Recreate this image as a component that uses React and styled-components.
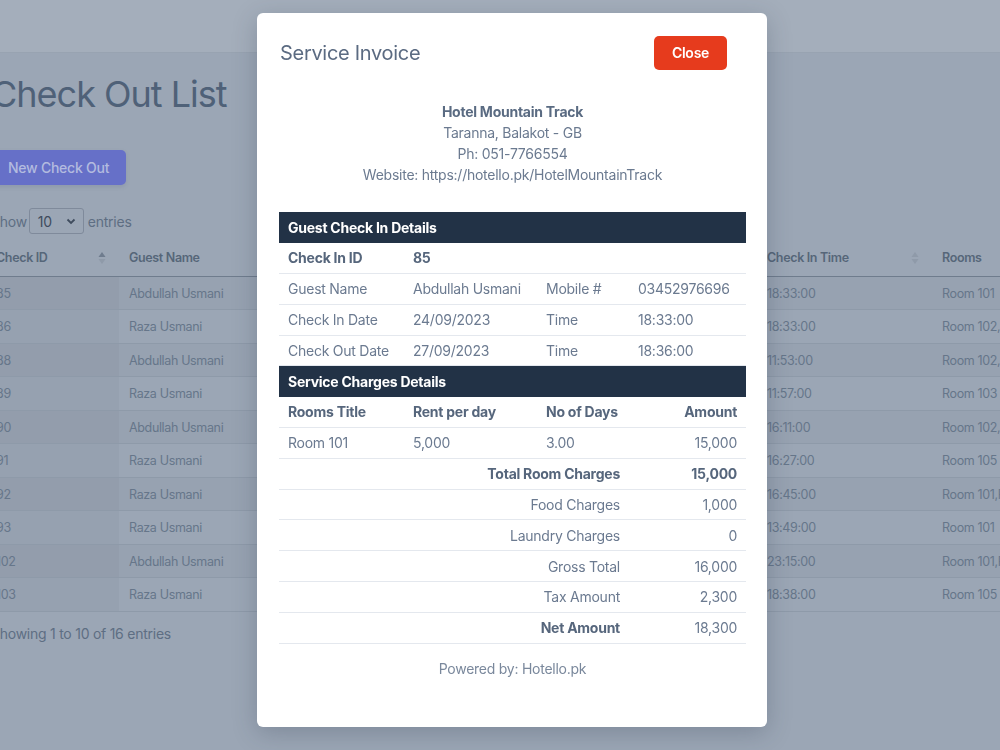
import React from "react";
import styled, { createGlobalStyle } from "styled-components";

const GlobalStyle = createGlobalStyle`
  html, body {
    margin: 0;
    padding: 0;
    background: #9ba6b5;
    font-family: Inter, "Noto Sans", "Liberation Sans", sans-serif;
    letter-spacing: -0.25px;
    overflow: hidden;
  }
  * { box-sizing: border-box; }
`;

const rows = [
  ["85", "Abdullah Usmani", "18:33:00", "Room 101"],
  ["86", "Raza Usmani", "18:33:00", "Room 102,Room 103"],
  ["88", "Abdullah Usmani", "11:53:00", "Room 102,Room 104"],
  ["89", "Raza Usmani", "11:57:00", "Room 103"],
  ["90", "Abdullah Usmani", "16:11:00", "Room 102,Room 105"],
  ["91", "Raza Usmani", "16:27:00", "Room 105"],
  ["92", "Raza Usmani", "16:45:00", "Room 101,Room 102"],
  ["93", "Raza Usmani", "13:49:00", "Room 101"],
  ["102", "Abdullah Usmani", "23:15:00", "Room 101,Room 104"],
  ["103", "Raza Usmani", "18:38:00", "Room 105"],
];

const charges = [
  { label: "Total Room Charges", value: "15,000", bold: true, boldValue: true },
  { label: "Food Charges", value: "1,000" },
  { label: "Laundry Charges", value: "0" },
  { label: "Gross Total", value: "16,000" },
  { label: "Tax Amount", value: "2,300" },
  { label: "Net Amount", value: "18,300", bold: true },
];

function SortIcon({ active }) {
  return (
    <SortSvg width="8" height="14" viewBox="0 0 8 14">
      <path d="M4 1 L7.5 6 L0.5 6 Z" fill={active ? "#6f7c8e" : "#8f9aa9"} />
      <path d="M4 13 L7.5 8 L0.5 8 Z" fill="#8f9aa9" />
    </SortSvg>
  );
}

export default function App() {
  return (
    <>
      <GlobalStyle />
      <Page>
        <NavBar />
        <Main>
          <Title>Check Out List</Title>
          <NewButton>New Check Out</NewButton>
          <ShowRow>
            Show
            <Select>
              <span>10</span>
              <svg width="10" height="7" viewBox="0 0 10 7">
                <path d="M1.5 1.5 L5 5 L8.5 1.5" fill="none" stroke="#3f4c5e" strokeWidth="1.8" />
              </svg>
            </Select>
            entries
          </ShowRow>
          <ListTable>
            <colgroup>
              <col style={{ width: 138 }} />
              <col style={{ width: 638 }} />
              <col style={{ width: 175 }} />
              <col style={{ width: 150 }} />
            </colgroup>
            <thead>
              <tr>
                <Th $first>
                  <HeadCell>Check ID <SortIcon active /></HeadCell>
                </Th>
                <Th>Guest Name</Th>
                <Th>
                  <HeadCell>Check In Time <SortIcon /></HeadCell>
                </Th>
                <Th>Rooms</Th>
              </tr>
            </thead>
            <tbody>
              {rows.map((r, i) => (
                <ListRow key={r[0]} $striped={i % 2 === 0}>
                  <Td $sorted $first>{r[0]}</Td>
                  <Td>{r[1]}</Td>
                  <Td>{r[2]}</Td>
                  <Td>{r[3]}</Td>
                </ListRow>
              ))}
            </tbody>
          </ListTable>
          <Info>Showing 1 to 10 of 16 entries</Info>
        </Main>
      </Page>

      <Overlay>
        <Modal>
          <ModalHeader>
            <ModalTitle>Service Invoice</ModalTitle>
            <CloseButton>Close</CloseButton>
          </ModalHeader>

          <Hotel>
            <HotelName>Hotel Mountain Track</HotelName>
            <div>Taranna, Balakot - GB</div>
            <div>Ph: 051-7766554</div>
            <div>Website: https://hotello.pk/HotelMountainTrack</div>
          </Hotel>

          <Invoice>
            <colgroup>
              <col style={{ width: 125 }} />
              <col style={{ width: 133 }} />
              <col style={{ width: 92 }} />
              <col style={{ width: 117 }} />
            </colgroup>
            <tbody>
              <tr>
                <SectionCell colSpan={4}>Guest Check In Details</SectionCell>
              </tr>
              <tr>
                <Cell $bold>Check In ID</Cell>
                <Cell $bold>85</Cell>
                <Cell />
                <Cell />
              </tr>
              <tr>
                <Cell>Guest Name</Cell>
                <Cell>Abdullah Usmani</Cell>
                <Cell>Mobile #</Cell>
                <Cell>03452976696</Cell>
              </tr>
              <tr>
                <Cell>Check In Date</Cell>
                <Cell>24/09/2023</Cell>
                <Cell>Time</Cell>
                <Cell>18:33:00</Cell>
              </tr>
              <tr>
                <Cell>Check Out Date</Cell>
                <Cell>27/09/2023</Cell>
                <Cell>Time</Cell>
                <Cell>18:36:00</Cell>
              </tr>
              <tr>
                <SectionCell colSpan={4}>Service Charges Details</SectionCell>
              </tr>
              <tr>
                <Cell $bold>Rooms Title</Cell>
                <Cell $bold>Rent per day</Cell>
                <Cell $bold>No of Days</Cell>
                <Cell $bold $right>Amount</Cell>
              </tr>
              <tr>
                <Cell>Room 101</Cell>
                <Cell>5,000</Cell>
                <Cell>3.00</Cell>
                <Cell $right>15,000</Cell>
              </tr>
              {charges.map((c) => (
                <tr key={c.label}>
                  <Cell colSpan={3} $right $bold={c.bold}>
                    {c.label}
                  </Cell>
                  <Cell $right $bold={c.boldValue}>
                    {c.value}
                  </Cell>
                </tr>
              ))}
            </tbody>
          </Invoice>

          <Powered>Powered by: Hotello.pk</Powered>
        </Modal>
      </Overlay>
    </>
  );
}

const Page = styled.div`
  min-height: 750px;
  background: #9ba6b5;
`;

const NavBar = styled.div`
  height: 53px;
  background: #a4aebb;
  border-bottom: 1px solid #98a3b1;
`;

const Main = styled.div`
  margin-left: -9px;
  padding-top: 19px;
  display: flex;
  flex-direction: column;
  align-items: flex-start;
`;

const Title = styled.h1`
  margin: 0;
  font-size: 36px;
  line-height: 44px;
  font-weight: 400;
  letter-spacing: -1px;
  color: #4f6178;
`;

const NewButton = styled.div`
  margin-top: 34px;
  height: 35px;
  padding: 0 17px 0 17px;
  display: flex;
  align-items: center;
  background: #6670c8;
  color: #b3bbdf;
  font-size: 14px;
  font-weight: 500;
  border-radius: 5px;
  box-shadow: 0 2px 4px rgba(70, 80, 120, 0.15);
`;

const ShowRow = styled.div`
  margin-top: 23px;
  display: flex;
  align-items: center;
  gap: 2px;
  font-size: 14px;
  color: #5e6e83;
`;

const Select = styled.div`
  width: 55px;
  height: 26px;
  margin-right: 2px;
  padding: 0 7px 0 8px;
  display: flex;
  align-items: center;
  justify-content: space-between;
  border: 1px solid #7f8a9b;
  border-radius: 3px;
  color: #3f4c5e;
`;

const ListTable = styled.table`
  margin: 5px 0 0 -10px;
  border-collapse: collapse;
  table-layout: fixed;
  width: 1101px;
  font-size: 12.5px;
  letter-spacing: -0.35px;
`;

const Th = styled.th`
  height: 37px;
  padding: 1px 10px 0 ${(p) => (p.$first ? "15px" : "10px")};
  text-align: left;
  font-weight: 600;
  color: #566679;
  border-bottom: 1px solid #6f7c8d;
  white-space: nowrap;
`;

const HeadCell = styled.div`
  display: flex;
  align-items: center;
  justify-content: space-between;
`;

const SortSvg = styled.svg`
  margin-right: 3px;
`;

const ListRow = styled.tr`
  background: ${(p) => (p.$striped ? "#97a2b1" : "transparent")};
`;

const Td = styled.td`
  height: 33.5px;
  padding: 1px 10px 0 ${(p) => (p.$first ? "15px" : "10px")};
  color: #66768a;
  border-bottom: 1px solid #8e9aa9;
  white-space: nowrap;
  overflow: hidden;
  background: ${(p) => (p.$sorted ? "rgba(80, 92, 110, 0.06)" : "transparent")};
`;

const Info = styled.div`
  margin-top: 12px;
  font-size: 14px;
  line-height: 20px;
  color: #5e6e83;
`;

const Overlay = styled.div`
  position: fixed;
  inset: 0;
  display: flex;
  justify-content: center;
  align-items: flex-start;
  padding: 13px 0 0 24px;
`;

const Modal = styled.div`
  width: 510px;
  height: 714px;
  background: #ffffff;
  border-radius: 6px;
  box-shadow: 0 6px 24px rgba(40, 50, 70, 0.25);
  padding: 23px 21px 0 22px;
  display: flex;
  flex-direction: column;
`;

const ModalHeader = styled.div`
  display: flex;
  align-items: center;
  justify-content: space-between;
  padding: 0 19px 0 1px;
`;

const ModalTitle = styled.div`
  font-size: 20px;
  letter-spacing: -0.3px;
  color: #5b6b82;
`;

const CloseButton = styled.div`
  width: 73px;
  height: 34px;
  padding-bottom: 2px;
  display: flex;
  align-items: center;
  justify-content: center;
  background: #e63b1d;
  color: #ffffff;
  font-size: 14px;
  font-weight: 600;
  border-radius: 5px;
`;

const Hotel = styled.div`
  margin-top: 31px;
  text-align: center;
  font-size: 14px;
  line-height: 21px;
  color: #6b7a90;
`;

const HotelName = styled.div`
  font-weight: 700;
  color: #5a6b82;
`;

const Invoice = styled.table`
  margin-top: 27px;
  width: 467px;
  border-collapse: collapse;
  table-layout: fixed;
  font-size: 14px;
`;

const SectionCell = styled.td`
  height: 30.8px;
  padding: 0 9px;
  background: #223246;
  color: #ffffff;
  font-weight: 700;
`;

const Cell = styled.td`
  height: 30.8px;
  padding: 0 9px;
  border-bottom: 1px solid #e4e8ee;
  color: ${(p) => (p.$bold ? "#56667c" : "#6b7a90")};
  font-weight: ${(p) => (p.$bold ? 700 : 400)};
  text-align: ${(p) => (p.$right ? "right" : "left")};
  white-space: nowrap;
`;

const Powered = styled.div`
  margin-top: 15px;
  text-align: center;
  font-size: 14px;
  line-height: 20px;
  color: #7a889c;
`;
